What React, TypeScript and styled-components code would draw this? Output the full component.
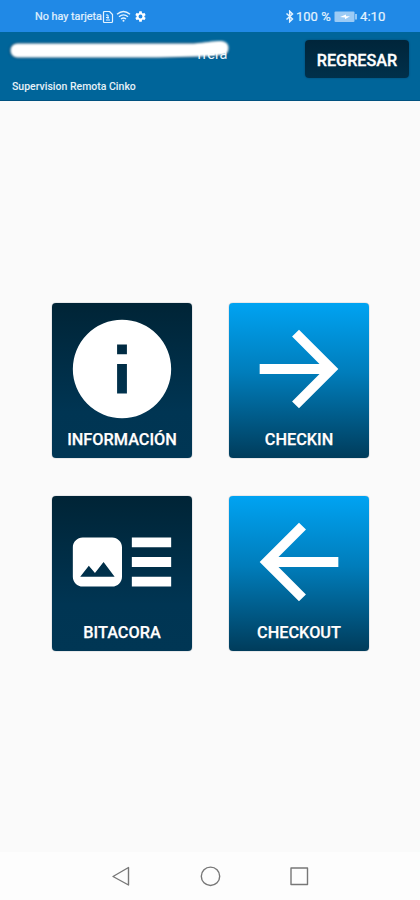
import React from "react";
import styled, { createGlobalStyle } from "styled-components";

const Global = createGlobalStyle`
  * { box-sizing: border-box; }
  body { margin: 0; font-family: Roboto, "Liberation Sans", sans-serif; }
`;

const Screen = styled.div`
  width: 420px;
  height: 900px;
  display: flex;
  flex-direction: column;
  background: #fafafa;
  overflow: hidden;
`;

const StatusBar = styled.div`
  height: 32px;
  flex: none;
  display: flex;
  justify-content: space-between;
  align-items: center;
  padding: 1px 34px 0 35px;
  background: #2089e6;
  color: #e3f3ff;
`;

const StatusGroup = styled.div`
  display: flex;
  align-items: center;
`;

const StatusText = styled.span<{ $size: number; $width: number }>`
  font-size: ${(p) => p.$size}px;
  width: ${(p) => p.$width}px;
  line-height: 16px;
  white-space: nowrap;
  -webkit-text-stroke: 0.2px currentColor;
`;

const StatusIcon = styled.svg<{ $gap?: number }>`
  display: block;
  flex: none;
  margin-right: ${(p) => p.$gap ?? 0}px;
`;

const Header = styled.header`
  height: 69px;
  flex: none;
  display: flex;
  justify-content: space-between;
  padding: 8px 11px 0 8px;
  background: #00659a;
  border-bottom: 1px solid #00517f;
`;

const Account = styled.div`
  display: flex;
  flex-direction: column;
`;

const Smudge = styled.svg`
  display: block;
  margin-bottom: 17px;
  overflow: visible;
`;

const Subtitle = styled.div`
  padding: 1px 0 0 4px;
  font-size: 10.5px;
  line-height: 14px;
  font-weight: 500;
  color: #e6f1f8;
`;

const BackButton = styled.button`
  width: 104px;
  height: 38px;
  padding: 2px 0 0;
  border: 0;
  border-radius: 4px;
  background: linear-gradient(#00253a, #00304b);
  box-shadow: 0 0 2px #00446c;
  color: #fff;
  font: 500 16.2px Roboto, sans-serif;
  -webkit-text-stroke: 0.3px currentColor;
`;

const Main = styled.main`
  flex: 1;
  display: grid;
  grid-template-columns: 140px 140px;
  grid-template-rows: 155px 155px;
  gap: 38px 37px;
  align-content: start;
  padding: 202px 0 0 52px;
`;

const Tile = styled.button<{ $bright?: boolean }>`
  display: flex;
  flex-direction: column;
  align-items: center;
  padding: 7px 0 0;
  border: 0;
  border-radius: 4px;
  background: ${(p) =>
    p.$bright
      ? "linear-gradient(#00a3f2, #007dbb 45%, #003c5b)"
      : "linear-gradient(#002436, #003553 70%, #003654)"};
  box-shadow: 0 0 1px rgba(0, 25, 45, 0.7);
  color: #fff;
`;

const TileIcon = styled.svg`
  display: block;
  width: 118px;
  height: 118px;
  fill: #fff;
`;

const TileLabel = styled.span`
  margin-top: 2px;
  font: 500 16.3px/20px Roboto, sans-serif;
  -webkit-text-stroke: 0.25px currentColor;
  text-shadow: 0 0 1px rgba(0, 20, 45, 0.6);
`;

const NavBar = styled.nav`
  height: 48px;
  flex: none;
  display: flex;
  justify-content: space-between;
  align-items: center;
  padding: 0 110px;
  background: #fdfdfd;
`;

const NavIcon = styled.svg`
  display: block;
  overflow: visible;
  fill: none;
  stroke: #777;
  stroke-width: 1.4;
  stroke-linejoin: round;
`;

const tiles = [
  {
    label: "INFORMACIÓN",
    bright: false,
    path: "M12 2a10 10 0 1 0 0 20 10 10 0 0 0 0-20zm1 15h-2v-6h2v6zm0-8h-2V7h2v2z",
  },
  {
    label: "CHECKIN",
    bright: true,
    path: "M12 4l-1.41 1.41L16.17 11H4v2h12.17l-5.58 5.59L12 20l8-8z",
  },
  {
    label: "BITACORA",
    bright: false,
    path: "M22 13h-8v-2h8v2zm0-6h-8v2h8V7zm-8 10h8v-2h-8v2zm-2-8v6c0 1.1-.9 2-2 2H4c-1.1 0-2-.9-2-2V9c0-1.1.9-2 2-2h6c1.1 0 2 .9 2 2zm-1.5 6l-2.25-3-1.75 2.26-1.25-1.51L3.5 15h7z",
  },
  {
    label: "CHECKOUT",
    bright: true,
    path: "M20 11H7.83l5.59-5.59L12 4l-8 8 8 8 1.41-1.41L7.83 13H20v-2z",
  },
];

export default function App() {
  return (
    <>
      <Global />
      <Screen>
        <StatusBar>
          <StatusGroup>
            <StatusText $size={10.8} $width={67}>No hay tarjeta</StatusText>
            <StatusIcon width="12" height="14" viewBox="0 0 12 14" $gap={2} fill="none" stroke="currentColor">
              <path d="M1.5 2.5q0-1 1-1h5l3 3v7q0 1-1 1h-7q-1 0-1-1z" strokeWidth="1.2" strokeLinejoin="round" />
              <path d="M4 5h2M6 5v4M4 10h4M4 7.5h3" strokeWidth="1" />
            </StatusIcon>
            <StatusIcon width="15" height="13" viewBox="0 0 15 13" $gap={3} fill="none" stroke="currentColor">
              <path d="M1 4.2q6.5-5.4 13 0M3 6.7q4.5-3.6 9 0M5 9q2.5-2 5 0" strokeWidth="1.4" />
              <circle cx="7.5" cy="10.8" r="1" fill="currentColor" stroke="none" />
            </StatusIcon>
            <StatusIcon width="13" height="13" viewBox="0 0 24 24" fill="#fff">
              <path d="M19.14 12.94c.04-.3.06-.61.06-.94s-.02-.64-.07-.94l2.03-1.58a.5.5 0 0 0 .12-.61l-1.92-3.32a.49.49 0 0 0-.59-.22l-2.39.96a7 7 0 0 0-1.62-.94L14.4 2.81a.48.48 0 0 0-.48-.41h-3.84a.47.47 0 0 0-.47.41l-.36 2.54a7 7 0 0 0-1.62.94l-2.39-.96a.48.48 0 0 0-.59.22L2.74 8.87a.47.47 0 0 0 .12.61l2.03 1.58a6 6 0 0 0 0 1.88l-2.03 1.58a.5.5 0 0 0-.12.61l1.92 3.32c.12.22.37.29.59.22l2.39-.96c.5.38 1.03.7 1.62.94l.36 2.54c.05.24.24.41.48.41h3.84c.24 0 .44-.17.47-.41l.36-2.54a7 7 0 0 0 1.62-.94l2.39.96c.22.08.47 0 .59-.22l1.92-3.32a.47.47 0 0 0-.12-.61zM12 15.6a3.6 3.6 0 1 1 0-7.2 3.6 3.6 0 0 1 0 7.2z" />
            </StatusIcon>
          </StatusGroup>
          <StatusGroup>
            <StatusIcon width="10" height="13" viewBox="0 0 10 13" $gap={1} fill="none" stroke="currentColor" strokeWidth="1.5">
              <path d="M1.5 3.5l6 5.5L4.7 11.7V1.3L7.5 4l-6 5.5" />
            </StatusIcon>
            <StatusText $size={13} $width={38}>100 %</StatusText>
            <StatusIcon width="24" height="12" viewBox="0 0 24 12" $gap={2}>
              <rect x="0.5" y="0.5" width="20" height="10.5" rx="1" fill="#9ccbf5" />
              <path d="M22 3v5.5" stroke="#b9dcfa" strokeWidth="1.5" />
              <path d="M6 6l6-2.5v1.7h4l-5 3v-1.7z" fill="#fff" />
            </StatusIcon>
            <StatusText $size={13.2} $width={26}>4:10</StatusText>
          </StatusGroup>
        </StatusBar>
        <Header>
          <Account>
            <Smudge width="224" height="22" viewBox="0 0 224 22">
              <defs>
                <filter id="soft" filterUnits="userSpaceOnUse" x="-6" y="-6" width="240" height="34">
                  <feGaussianBlur stdDeviation="0.9" />
                </filter>
              </defs>
              <path d="M9 10.5L198 10L213 9.5" fill="none" stroke="#10273f" strokeWidth="16" strokeLinecap="round" opacity="0.35" filter="url(#soft)" />
              <text x="189.5" y="18.5" fontSize="14.5" fill="#e9f4fa">rrera</text>
              <path d="M9 3.5H186C198 2.5 203 1 214 1Q221 2 220.500 9Q220 15 213 15L192 16.500L150 17.500H9Q2.500 16.500 2.500 10.500Q2.500 4.500 9 3.500Z" fill="#fff" filter="url(#soft)" />
            </Smudge>
            <Subtitle>Supervision Remota Cinko</Subtitle>
          </Account>
          <BackButton>REGRESAR</BackButton>
        </Header>
        <Main>
          {tiles.map((t) => (
            <Tile key={t.label} $bright={t.bright}>
              <TileIcon viewBox="0 0 24 24">
                <path d={t.path} />
              </TileIcon>
              <TileLabel>{t.label}</TileLabel>
            </Tile>
          ))}
        </Main>
        <NavBar>
          <NavIcon width="20" height="20" viewBox="0 0 20 20">
            <path d="M18.5 1.500v17.500L3 10.500z" />
          </NavIcon>
          <NavIcon width="20" height="20" viewBox="0 0 20 20">
            <circle cx="10.5" cy="10.3" r="9.2" />
          </NavIcon>
          <NavIcon width="20" height="20" viewBox="0 0 20 20">
            <rect x="1" y="2" width="16.5" height="16.5" />
          </NavIcon>
        </NavBar>
      </Screen>
    </>
  );
}
